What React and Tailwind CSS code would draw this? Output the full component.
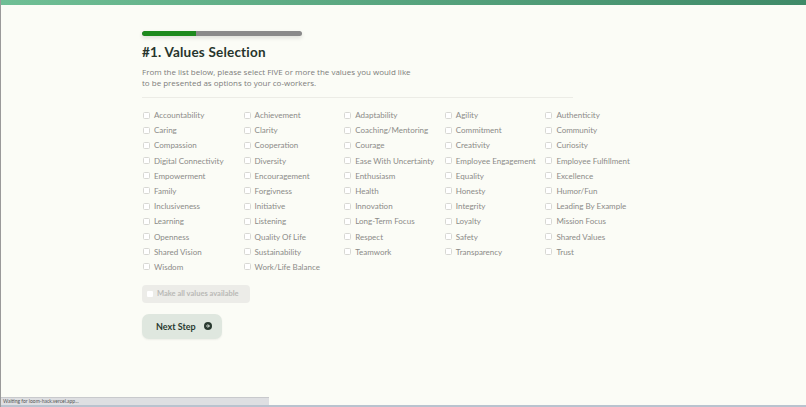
import React from "react";

const values = [
  "Accountability", "Achievement", "Adaptability", "Agility", "Authenticity",
  "Caring", "Clarity", "Coaching/Mentoring", "Commitment", "Community",
  "Compassion", "Cooperation", "Courage", "Creativity", "Curiosity",
  "Digital Connectivity", "Diversity", "Ease With Uncertainty", "Employee Engagement", "Employee Fulfillment",
  "Empowerment", "Encouragement", "Enthusiasm", "Equality", "Excellence",
  "Family", "Forgivness", "Health", "Honesty", "Humor/Fun",
  "Inclusiveness", "Initiative", "Innovation", "Integrity", "Leading By Example",
  "Learning", "Listening", "Long-Term Focus", "Loyalty", "Mission Focus",
  "Openness", "Quality Of Life", "Respect", "Safety", "Shared Values",
  "Shared Vision", "Sustainability", "Teamwork", "Transparency", "Trust",
  "Wisdom", "Work/Life Balance",
];

const App = () => {
  return (
    <div className="relative h-[407px] w-[806px] overflow-hidden bg-[#fbfcf6] font-['Lato',sans-serif] border-l border-[#9a9a9a]">
      <div className="h-[5px] bg-gradient-to-r from-[#6fbf95] to-[#3f8a68]" />

      <div className="pl-[141px] pt-[26px]">
        <div className="h-[5px] w-[160px] rounded-full bg-[#8a8a8a] shadow-[0_2px_4px_rgba(0,0,0,0.12)] overflow-hidden">
          <div className="h-full w-[54px] bg-[#1e8a1e] rounded-l-full" />
        </div>

        <h1 className="mt-[7px] text-[13.5px] font-bold text-[#27352c] leading-[18px] tracking-[0.2px]">
          #1. Values Selection
        </h1>
        <p className="mt-[4.5px] text-[8px] leading-[11px] text-[#7d7d7b] font-['Open_Sans',sans-serif] whitespace-nowrap">
          From the list below, please select FIVE or more the values you would like
          <br />
          to be presented as options to your co-workers.
        </p>

        <div className="mt-[9.5px] w-[431px] h-px bg-[#ecece6]" />

        <div className="mt-[12.5px] grid grid-cols-5 w-[503px] gap-y-[6.2px]">
          {values.map((v) => (
            <label key={v} className="flex items-center h-[9px] text-[8px] text-[#8b8b88] whitespace-nowrap">
              <span className="shrink-0 w-[7px] h-[7px] ml-[1px] mr-[4px] border border-[#d8d8d4] rounded-[1.5px] bg-white" />
              {v}
            </label>
          ))}
        </div>

        <div className="mt-[13.5px] flex items-center w-[108px] h-[18px] rounded-[4px] bg-[#ecece8] px-[5px] text-[7.5px] font-bold text-[#b9b9b6] whitespace-nowrap">
          <span className="shrink-0 w-[6px] h-[6px] mr-[4px] rounded-[1px] bg-white" />
          Make all values available
        </div>

        <button className="mt-[11px] flex items-center gap-[8px] w-[80px] h-[25px] rounded-[7px] bg-[#dfe7df] pl-[14px] text-[9px] font-bold text-[#2a3a30] shadow-[0_1px_2px_rgba(0,0,0,0.06)]">
          Next Step
          <svg width="8" height="8" viewBox="0 0 16 16">
            <circle cx="8" cy="8" r="8" fill="#2a3a30" />
            <path d="M5 8h5M8 5.2 10.8 8 8 10.8" stroke="#dfe7df" strokeWidth="2" fill="none" strokeLinecap="round" strokeLinejoin="round" />
          </svg>
        </button>
      </div>

      <div className="absolute left-0 bottom-[2px] w-[268px] h-[8px] bg-[#dedfe2] border-t border-[#c8c9cc] flex items-center px-[2px] text-[5px] text-[#555]">
        Waiting for loom-hack.vercel.app...
      </div>
      <div className="absolute left-0 bottom-0 w-full h-[2px] bg-[#b9c3cf]" />
    </div>
  );
};

export default App;
